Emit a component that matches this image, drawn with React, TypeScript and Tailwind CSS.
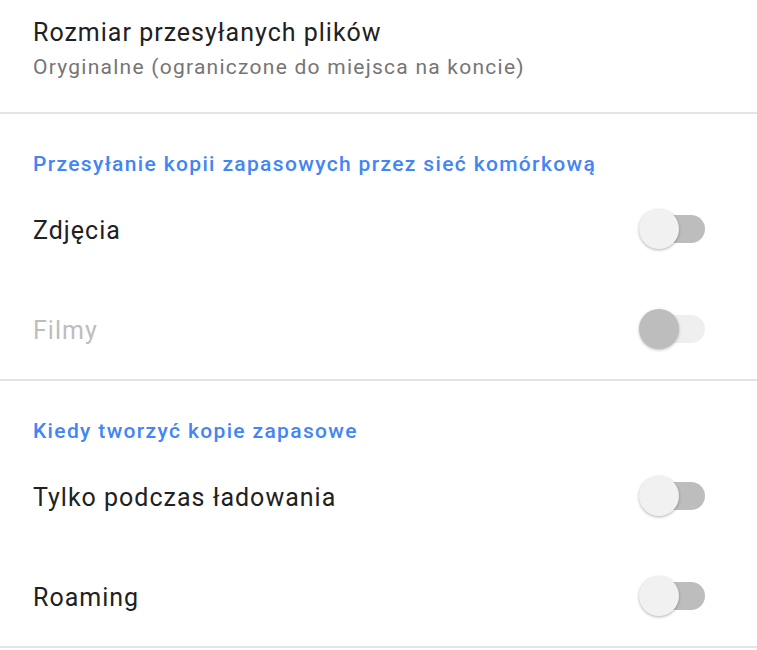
import React from "react";

type ToggleProps = { disabled?: boolean };

const Toggle: React.FC<ToggleProps> = ({ disabled }) => (
  <div className="relative h-[40px] w-[66px] shrink-0">
    <div
      className={`absolute left-[4px] right-0 top-[6px] h-[28px] rounded-full ${
        disabled ? "bg-[#efefef]" : "bg-[#bdbdbd]"
      }`}
    />
    <div
      className={`absolute left-0 top-0 h-[40px] w-[40px] rounded-full ${
        disabled
          ? "bg-[#bdbdbd] shadow-[0_1px_3px_rgba(0,0,0,0.25)]"
          : "bg-[#f1f1f1] shadow-[0_1px_3px_rgba(0,0,0,0.3)]"
      }`}
    />
  </div>
);

const SectionHeader: React.FC<{ children: React.ReactNode }> = ({ children }) => (
  <div className="px-[33px] pb-[1px] pt-[36px] text-[21px] font-medium leading-[28px] tracking-[1.35px] text-[#4285f4]">
    {children}
  </div>
);

const Row: React.FC<{ label: string; disabled?: boolean }> = ({ label, disabled }) => (
  <div className="flex h-[100px] items-center justify-between pl-[33px] pr-[52px]">
    <span
      className={`pt-[3px] text-[25px] leading-[32px] tracking-[1px] ${
        disabled ? "text-[#bdbdbd]" : "text-[#212121]"
      }`}
    >
      {label}
    </span>
    <Toggle disabled={disabled} />
  </div>
);

export default function App() {
  return (
    <div className="h-[650px] w-[757px] overflow-hidden bg-white font-['Roboto',sans-serif]">
      <div className="px-[33px] pb-[31px] pt-[17px]">
        <div className="text-[25px] leading-[32px] tracking-[1px] text-[#212121]">
          Rozmiar przesyłanych plików
        </div>
        <div className="mt-[4px] text-[21px] leading-[28px] tracking-[1.25px] text-[#757575]">
          Oryginalne (ograniczone do miejsca na koncie)
        </div>
      </div>
      <div className="h-[2px] bg-[#e3e3e3]" />

      <SectionHeader>Przesyłanie kopii zapasowych przez sieć komórkową</SectionHeader>
      <Row label="Zdjęcia" />
      <Row label="Filmy" disabled />
      <div className="h-[2px] bg-[#e3e3e3]" />

      <SectionHeader>Kiedy tworzyć kopie zapasowe</SectionHeader>
      <Row label="Tylko podczas ładowania" />
      <Row label="Roaming" />
      <div className="h-[2px] bg-[#e3e3e3]" />
    </div>
  );
}
